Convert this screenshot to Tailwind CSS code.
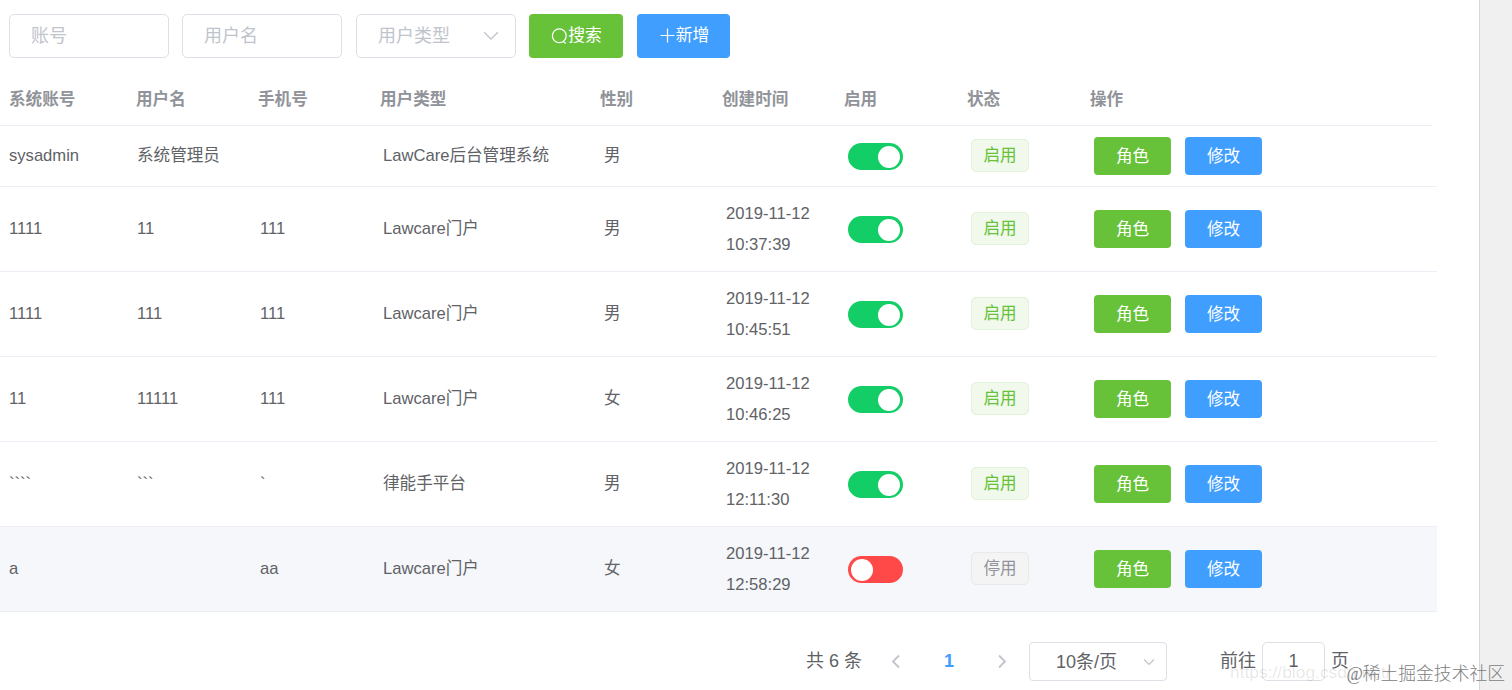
<!DOCTYPE html>
<html lang="zh-CN">
  <head>
    <meta charset="UTF-8" />
    <meta name="viewport" content="width=device-width, initial-scale=1.0" />
    <title>用户管理</title>
    <script src="https://cdn.jsdelivr.net/npm/@tailwindcss/browser@4"></script>
  </head>
  <body class="relative flex h-[690px] overflow-hidden bg-[#f0f0f0] font-['Liberation_Sans','Noto_Sans_CJK_SC',sans-serif] text-[16.6px] text-[#606266]">
    <main class="w-[1480px] border-r border-[#d8d8d8] bg-white">
      <!-- Search bar -->
      <form class="flex pt-3.5 pl-[9px] text-[18px] leading-[42px]">
        <input type="text" placeholder="账号" class="mr-[13px] h-11 w-40 rounded-[5px] border border-[#dcdfe6] px-[21px] placeholder:text-[#c0c4cc]" />
        <input type="text" placeholder="用户名" class="mr-3.5 h-11 w-40 rounded-[5px] border border-[#dcdfe6] px-[21px] placeholder:text-[#c0c4cc]" />
        <div class="mr-[13px] flex h-11 w-40 items-center justify-between rounded-[5px] border border-[#dcdfe6] pr-4 pl-[21px] text-[#c0c4cc]">
          <span>用户类型</span>
          <svg class="h-4 w-4" viewBox="0 0 16 16" fill="none" stroke="currentColor" stroke-width="1.3"><path d="M1.2 4.2 8 11l6.8-6.8" /></svg>
        </div>
        <button type="button" class="mr-3.5 flex h-11 w-[94px] items-center justify-center rounded-[4px] bg-[#67c23a] pl-px text-[16.8px] text-white">
          <svg class="h-[17px] w-[17px]" viewBox="0 0 17 17" fill="none" stroke="currentColor" stroke-width="1.2"><circle cx="8.3" cy="7.7" r="6.9" /><path d="m11.8 13 2.9 2.5" /></svg>
          搜索
        </button>
        <button type="button" class="flex h-11 w-[93px] items-center justify-center rounded-[4px] bg-[#409eff] pl-0.5 text-[16.8px] text-white">
          <svg class="h-4 w-4" viewBox="0 0 16 16" fill="none" stroke="currentColor" stroke-width="1.2"><path d="M7.5 .5v14M.5 7.5h14" /></svg>
          新增
        </button>
      </form>

      <!-- Table -->
      <div class="mt-[14px] grid h-[54px] w-[1432px] grid-cols-[127px_122px_122px_220px_122px_122px_123px_123px_1fr] items-center border-b border-[#ebeef5] pt-1 pl-[9px] font-bold text-[#909399]">
        <span>系统账号</span>
        <span>用户名</span>
        <span>手机号</span>
        <span>用户类型</span>
        <span>性别</span>
        <span>创建时间</span>
        <span>启用</span>
        <span>状态</span>
        <span>操作</span>
      </div>
      <div id="rows"></div>

      <!-- Pagination -->
      <div class="mt-[30px] flex h-[39px] items-center pl-[806px] text-[18px] leading-none">
        <span class="mb-0.5 w-[82px] whitespace-nowrap">共 6 条</span>
        <svg class="h-4 w-4" viewBox="0 0 16 16" fill="none" stroke="#c0c4cc" stroke-width="1.8"><path d="M11 1.5 5 7.5l6 6" /></svg>
        <span class="mb-0.5 w-[90px] text-center font-bold text-[#409eff]">1</span>
        <svg class="h-4 w-4" viewBox="0 0 16 16" fill="none" stroke="#c0c4cc" stroke-width="1.8"><path d="m5 1.5 6 6-6 6" /></svg>
        <div class="ml-[19px] flex h-[39px] w-[138px] items-center justify-between rounded-[4px] border border-[#dcdfe6] pr-[11px] pl-[26px]">
          <span>10条/页</span>
          <svg class="h-3 w-3" viewBox="0 0 12 12" fill="none" stroke="#c0c4cc" stroke-width="1.2"><path d="m1 3.5 5 5 5-5" /></svg>
        </div>
        <span class="mb-0.5 ml-[53px] w-[42px]">前往</span>
        <input type="text" value="1" class="mr-1.5 h-[39px] w-[63px] rounded-[5px] border border-[#dcdfe6] text-center" />
        <span class="mb-0.5">页</span>
      </div>
    </main>

    <!-- Watermarks -->
    <div class="absolute top-[662px] left-[1230px] text-[17.4px] leading-5 text-black/10">https://blog.csdn.net/</div>
    <div class="absolute top-[662px] right-[7px] font-['Liberation_Serif','Noto_Sans_CJK_SC',serif] text-[17.8px] leading-6 font-light whitespace-nowrap text-[#808080]">@稀土掘金技术社区</div>

    <script>
      const users = [
        { account: "sysadmin", name: "系统管理员", phone: "", type: "LawCare后台管理系统", sex: "男", date: "", time: "", on: true },
        { account: "1111", name: "11", phone: "111", type: "Lawcare门户", sex: "男", date: "2019-11-12", time: "10:37:39", on: true },
        { account: "1111", name: "111", phone: "111", type: "Lawcare门户", sex: "男", date: "2019-11-12", time: "10:45:51", on: true },
        { account: "11", name: "11111", phone: "111", type: "Lawcare门户", sex: "女", date: "2019-11-12", time: "10:46:25", on: true },
        { account: "````", name: "```", phone: "`", type: "律能手平台", sex: "男", date: "2019-11-12", time: "12:11:30", on: true },
        { account: "a", name: "", phone: "aa", type: "Lawcare门户", sex: "女", date: "2019-11-12", time: "12:58:29", on: false },
      ];

      document.getElementById("rows").innerHTML = users
        .map(
          (u) => `
        <div class="grid w-[1437px] grid-cols-[128px_123px_123px_221px_122px_122px_123px_123px_1fr] items-center border-b border-[#ebeef5] pl-[9px] ${u.date ? "h-[85px]" : "h-[61px]"} ${u.on ? "bg-white" : "bg-[#f5f7fa]"}">
          <span>${u.account}</span>
          <span>${u.name}</span>
          <span>${u.phone}</span>
          <span class="whitespace-nowrap">${u.type}</span>
          <span>${u.sex}</span>
          <span class="leading-[31px]">${u.date}<br />${u.time}</span>
          <span class="mt-px flex h-[27px] w-[55px] items-center rounded-full px-[3px] ${u.on ? "justify-end bg-[#13ce66]" : "justify-start bg-[#ff4949]"}">
            <i class="h-[22px] w-[22px] rounded-full bg-white"></i>
          </span>
          <span class="mb-0.5 flex h-[33px] w-[58px] items-center justify-center rounded-[5px] border pt-0.5 ${u.on ? "border-[#e1f3d8] bg-[#f0f9eb] text-[#67c23a]" : "border-[#e9e9eb] bg-[#f4f4f5] text-[#909399]"}">${u.on ? "启用" : "停用"}</span>
          <div class="flex gap-3.5 text-white">
            <button type="button" class="h-[38px] w-[77px] rounded-[4px] bg-[#67c23a] pt-0.5">角色</button>
            <button type="button" class="h-[38px] w-[77px] rounded-[4px] bg-[#409eff] pt-0.5">修改</button>
          </div>
        </div>`
        )
        .join("");
    </script>
  </body>
</html>
